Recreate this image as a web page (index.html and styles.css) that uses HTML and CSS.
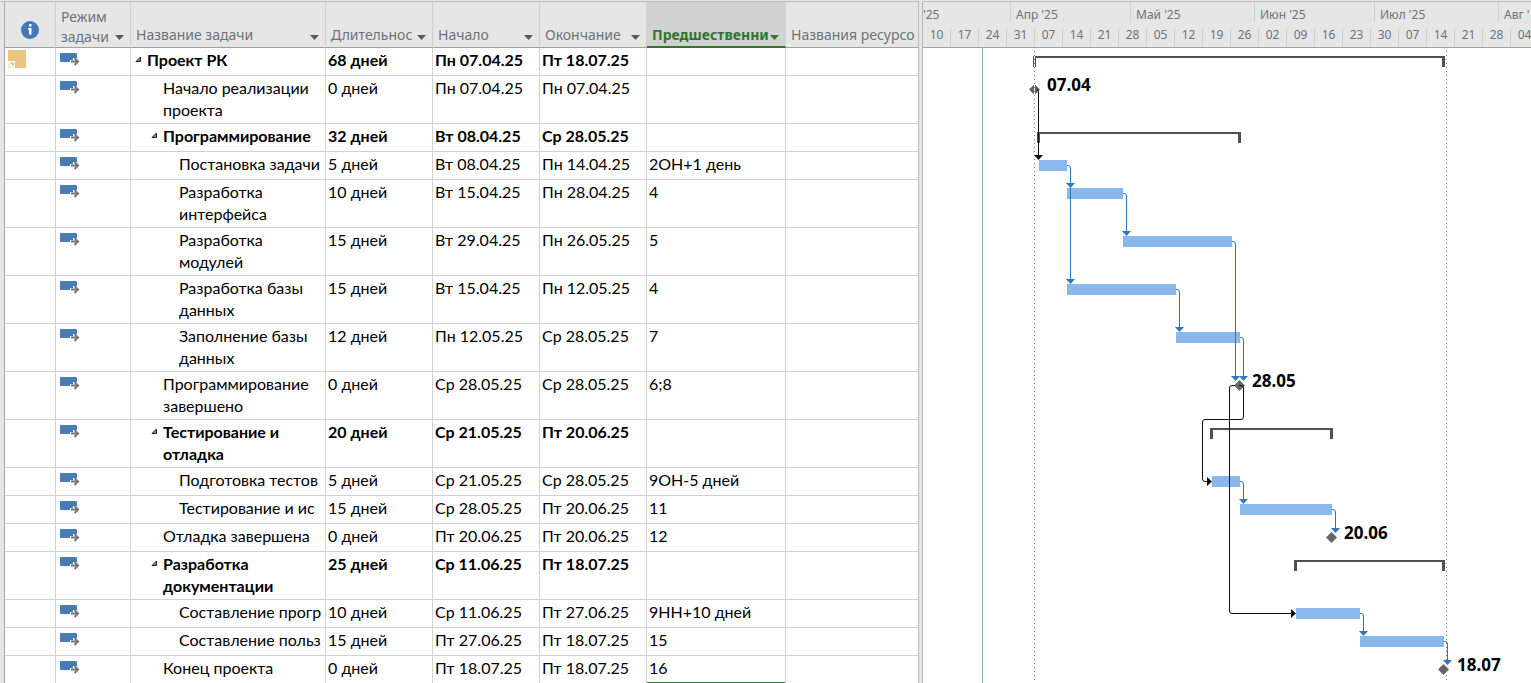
FILE: index.html
```
<!DOCTYPE html>
<html lang="ru">
<head>
<meta charset="utf-8">
<title>Проект РК</title>
<link rel="stylesheet" href="styles.css">
</head>
<body>
<svg class="defs" aria-hidden="true">
  <symbol id="mode" viewBox="0 0 20 14">
    <path fill="#487cb6" d="M1 1h15a1 1 0 0 1 1 1v4h-4v2h-3v2H1a1 1 0 0 1-1-1V2a1 1 0 0 1 1-1z"/>
    <path fill="none" stroke="#757575" stroke-width="2" d="M11 9.500h6M14.500 6l3.500 3.500-3.500 3.500"/>
  </symbol>
  <symbol id="fold" viewBox="0 0 7 7">
    <path fill="#8a8a8a" stroke="#222" d="M5.500 1v4.500H1z"/>
  </symbol>
  <symbol id="drop" viewBox="0 0 9 5"><path fill="currentColor" d="M0 0h9L4.500 5z"/></symbol>
</svg>
<main class="app">
  <section class="sheet">
    <table class="grid">
      <colgroup>
        <col class="c-info"><col class="c-mode"><col class="c-name"><col class="c-date"><col class="c-date"><col class="c-date"><col class="c-pred"><col>
      </colgroup>
      <thead>
        <tr>
          <th><div class="head info"><svg width="18" height="18" viewBox="0 0 18 18" role="img" aria-label="Индикаторы"><circle cx="9" cy="9" r="9" fill="#4478b6"/><path fill="#fff" d="M8 3h2.500v2.500H8zM7 7h3.500v6.500H8V8.500H7z"/></svg></div></th>
          <th><div class="head tall"><span>Режим<br>задачи</span><button aria-label="Меню: режим"><svg><use href="#drop"/></svg></button></div></th>
          <th><div class="head"><span>Название задачи</span><button aria-label="Меню: название"><svg><use href="#drop"/></svg></button></div></th>
          <th><div class="head"><span>Длительнос</span><button aria-label="Меню: длительность"><svg><use href="#drop"/></svg></button></div></th>
          <th><div class="head"><span>Начало</span><button aria-label="Меню: начало"><svg><use href="#drop"/></svg></button></div></th>
          <th><div class="head"><span>Окончание</span><button aria-label="Меню: окончание"><svg><use href="#drop"/></svg></button></div></th>
          <th class="active"><div class="head"><span>Предшественни</span><button aria-label="Меню: предшественники"><svg><use href="#drop"/></svg></button></div></th>
          <th><div class="head last"><span>Названия ресурсо</span></div></th>
        </tr>
      </thead>
      <tbody>
        <tr class="sum"><td class="note"><svg width="18" height="18" viewBox="0 0 18 18"><path fill="#e8c680" d="M0 0h18v18H7V11H0z"/><path fill="#e8c680" d="M1.500 12.500H6V17z"/><path fill="#e8c680" d="M0 13l5 5H0z" opacity=".35"/></svg></td><td class="mode"><svg><use href="#mode"/></svg></td><td class="l0"><button class="fold" aria-label="Свернуть"><svg><use href="#fold"/></svg></button>Проект РК</td><td>68 дней</td><td>Пн 07.04.25</td><td>Пт 18.07.25</td><td></td><td></td></tr>
        <tr><td></td><td class="mode"><svg><use href="#mode"/></svg></td><td class="l1">Начало реализации<br>проекта</td><td>0 дней</td><td>Пн 07.04.25</td><td>Пн 07.04.25</td><td></td><td></td></tr>
        <tr class="sum"><td></td><td class="mode"><svg><use href="#mode"/></svg></td><td class="l1"><button class="fold" aria-label="Свернуть"><svg><use href="#fold"/></svg></button>Программирование</td><td>32 дней</td><td>Вт 08.04.25</td><td>Ср 28.05.25</td><td></td><td></td></tr>
        <tr><td></td><td class="mode"><svg><use href="#mode"/></svg></td><td class="l2">Постановка задачи</td><td>5 дней</td><td>Вт 08.04.25</td><td>Пн 14.04.25</td><td>2ОН+1 день</td><td></td></tr>
        <tr><td></td><td class="mode"><svg><use href="#mode"/></svg></td><td class="l2">Разработка<br>интерфейса</td><td>10 дней</td><td>Вт 15.04.25</td><td>Пн 28.04.25</td><td>4</td><td></td></tr>
        <tr><td></td><td class="mode"><svg><use href="#mode"/></svg></td><td class="l2">Разработка<br>модулей</td><td>15 дней</td><td>Вт 29.04.25</td><td>Пн 26.05.25</td><td>5</td><td></td></tr>
        <tr><td></td><td class="mode"><svg><use href="#mode"/></svg></td><td class="l2">Разработка базы<br>данных</td><td>15 дней</td><td>Вт 15.04.25</td><td>Пн 12.05.25</td><td>4</td><td></td></tr>
        <tr><td></td><td class="mode"><svg><use href="#mode"/></svg></td><td class="l2">Заполнение базы<br>данных</td><td>12 дней</td><td>Пн 12.05.25</td><td>Ср 28.05.25</td><td>7</td><td></td></tr>
        <tr><td></td><td class="mode"><svg><use href="#mode"/></svg></td><td class="l1">Программирование<br>завершено</td><td>0 дней</td><td>Ср 28.05.25</td><td>Ср 28.05.25</td><td>6;8</td><td></td></tr>
        <tr class="sum"><td></td><td class="mode"><svg><use href="#mode"/></svg></td><td class="l1"><button class="fold" aria-label="Свернуть"><svg><use href="#fold"/></svg></button>Тестирование и<br>отладка</td><td>20 дней</td><td>Ср 21.05.25</td><td>Пт 20.06.25</td><td></td><td></td></tr>
        <tr><td></td><td class="mode"><svg><use href="#mode"/></svg></td><td class="l2">Подготовка тестов</td><td>5 дней</td><td>Ср 21.05.25</td><td>Ср 28.05.25</td><td>9ОН-5 дней</td><td></td></tr>
        <tr><td></td><td class="mode"><svg><use href="#mode"/></svg></td><td class="l2">Тестирование и ис</td><td>15 дней</td><td>Ср 28.05.25</td><td>Пт 20.06.25</td><td>11</td><td></td></tr>
        <tr><td></td><td class="mode"><svg><use href="#mode"/></svg></td><td class="l1">Отладка завершена</td><td>0 дней</td><td>Пт 20.06.25</td><td>Пт 20.06.25</td><td>12</td><td></td></tr>
        <tr class="sum"><td></td><td class="mode"><svg><use href="#mode"/></svg></td><td class="l1"><button class="fold" aria-label="Свернуть"><svg><use href="#fold"/></svg></button>Разработка<br>документации</td><td>25 дней</td><td>Ср 11.06.25</td><td>Пт 18.07.25</td><td></td><td></td></tr>
        <tr><td></td><td class="mode"><svg><use href="#mode"/></svg></td><td class="l2">Составление прогр</td><td>10 дней</td><td>Ср 11.06.25</td><td>Пт 27.06.25</td><td>9НН+10 дней</td><td></td></tr>
        <tr><td></td><td class="mode"><svg><use href="#mode"/></svg></td><td class="l2">Составление польз</td><td>15 дней</td><td>Пт 27.06.25</td><td>Пт 18.07.25</td><td>15</td><td></td></tr>
        <tr><td></td><td class="mode"><svg><use href="#mode"/></svg></td><td class="l1">Конец проекта</td><td>0 дней</td><td>Пт 18.07.25</td><td>Пт 18.07.25</td><td class="picked">16</td><td></td></tr>
      </tbody>
    </table>
  </section>
  <section class="gantt">
    <header class="scale">
      <div class="months"><span class="m-first">'25</span><span class="m30">Апр '25</span><span class="m31">Май '25</span><span class="m30">Июн '25</span><span class="m31">Июл '25</span><span class="m31">Авг '</span></div>
      <div class="weeks"><span>10</span><span>17</span><span>24</span><span>31</span><span>07</span><span>14</span><span>21</span><span>28</span><span>05</span><span>12</span><span>19</span><span>26</span><span>02</span><span>09</span><span>16</span><span>23</span><span>30</span><span>07</span><span>14</span><span>21</span><span>28</span><span>04</span></div>
    </header>
    <svg class="chart" role="img" aria-label="Диаграмма Ганта">
      <g transform="translate(-923 -48)">
        <path class="today" d="M982.500 48V700"/>
        <g class="bars">
          <rect x="1039" y="160" width="28" height="11"/>
          <rect x="1067" y="188" width="56" height="11"/>
          <rect x="1123" y="236" width="109" height="11"/>
          <rect x="1067" y="284" width="109" height="11"/>
          <rect x="1176" y="332" width="64" height="11"/>
          <rect x="1212" y="476" width="28" height="11"/>
          <rect x="1240" y="504" width="92" height="11"/>
          <rect x="1296" y="608" width="64" height="11"/>
          <rect x="1360" y="636" width="84" height="11"/>
        </g>
        <g class="sums">
          <path d="M1033 56h412v11h-3v-9h-406v9h-3z"/>
          <path d="M1037 132h204v11h-3v-9h-198v9h-3z"/>
          <path d="M1210 428h123v11h-3v-9h-117v9h-3z"/>
          <path d="M1294 560h151v11h-3v-9h-145v9h-3z"/>
        </g>
        <g class="miles">
          <path d="M1034.500 84l5.500 5.500-5.500 5.500-5.500-5.500z"/>
          <path d="M1239.500 380l5.500 5.500-5.500 5.500-5.500-5.500z"/>
          <path d="M1331.500 532l5.500 5.500-5.500 5.500-5.500-5.500z"/>
          <path d="M1443.500 664l5.500 5.500-5.500 5.500-5.500-5.500z"/>
        </g>
        <path class="edge" d="M1034.500 51V700M1446.500 51V700"/>
        <path class="gap" d="M1034.500 56V67M1034.500 84V95"/>
        <g class="links">
          <path d="M1067 165.500h1q2.500 0 2.500 2.500V280"/>
          <path d="M1123 193.500h1q2.500 0 2.500 2.500V232"/>
          <path d="M1232 241.500h1q2.500 0 2.500 2.500V377"/>
          <path d="M1176 289.500h1q2.500 0 2.500 2.500V328"/>
          <path d="M1240 337.500h1q2.500 0 2.500 2.500V377"/>
          <path d="M1240 481.500h1q2.500 0 2.500 2.500V500"/>
          <path d="M1332 509.500h1q2.500 0 2.500 2.500V529"/>
          <path d="M1360 613.500h1q2.500 0 2.500 2.500V632"/>
          <path d="M1444 641.500h1q2.500 0 2.500 2.500V661"/>
        </g>
        <g class="tips">
          <path d="M1066 183h9l-4.500 5zM1066 279h9l-4.500 5zM1122 231h9l-4.500 5zM1175 327h9l-4.500 5zM1231 376h9l-4.500 5zM1239 376h9l-4.500 5zM1239 499h9l-4.500 5zM1331 528h9l-4.500 5zM1359 631h9l-4.500 5zM1443 660h9l-4.500 5z"/>
        </g>
        <g class="dark-links">
          <path d="M1036 89.500h.500q2 0 2 2V156"/>
          <path d="M1239 385.500h2q2.500 0 2.500 2.500V417q0 2.500-2.500 2.500H1205q-2.500 0-2.500 2.500V479q0 2.500 2.500 2.500h3"/>
          <path d="M1235 385.500h-3q-2.500 0-2.500 2.500V611q0 2.500 2.500 2.500H1292"/>
        </g>
        <path class="dark-tips" d="M1034 155h9l-4.500 5zM1207 477v9l5-4.500zM1291 609v9l5-4.500z"/>
        <g class="labels">
          <text x="1047" y="91">07.04</text>
          <text x="1252" y="387">28.05</text>
          <text x="1344" y="539">20.06</text>
          <text x="1457" y="671">18.07</text>
        </g>
      </g>
    </svg>
  </section>
</main>
</body>
</html>
```
FILE: styles.css
```
* { box-sizing: border-box; }
body {
  margin: 0;
  background: #e6e6e6;
  font-family: "Noto Sans", "Open Sans", sans-serif;
  overflow: hidden;
}
.defs { position: absolute; width: 0; height: 0; }
.app {
  display: flex;
  gap: 3px;
  height: 100vh;
  padding-top: 1px;
  overflow: hidden;
}
.sheet {
  flex: 0 0 919px;
  padding-left: 4px;
  border-top: 1px solid #bdbdbd;
  border-right: 1px solid #b8b8b8;
  overflow: hidden;
}
.grid {
  width: 100%;
  table-layout: fixed;
  border-collapse: separate;
  border-spacing: 0;
  border-left: 1px solid #a6a6a6;
}
.c-info { width: 51px; }
.c-mode { width: 75px; }
.c-name { width: 195px; }
.c-date { width: 107px; }
.c-pred { width: 139px; }
th {
  height: 46px;
  padding: 0;
  vertical-align: bottom;
  background: #e6e6e6;
  border-right: 1px solid #cfcfcf;
  border-bottom: 1px solid #a0a0a0;
  color: #6d7278;
  font-size: 14px;
  font-weight: 400;
  line-height: 20px;
  text-align: left;
}
th:last-child, td:last-child { border-right: 0; }
.head {
  display: flex;
  align-items: flex-end;
  justify-content: space-between;
  gap: 1px;
  padding: 0 6px 2px 5px;
}
.head span { white-space: nowrap; }
.head.last { padding-right: 0; }
.head.tall { padding-bottom: 0; }
.head.info { justify-content: center; padding-bottom: 8px; }
.head button, .fold {
  flex: none;
  padding: 0;
  border: 0;
  background: none;
  color: #5a5a5a;
}
.head button {
  display: flex;
  align-items: flex-start;
  height: 10px;
}
.head.tall button { height: 12px; }
.head button svg { display: block; width: 9px; height: 5px; }
.active { background: #d2d2d2; border-bottom: 2px solid #2f752f; }
.active .head { color: #2f752f; font-weight: 700; padding-bottom: 1px; }
.active .head button { color: #2f752f; }
td {
  height: 28px;
  padding: 1px 2px 2px;
  vertical-align: top;
  background: #fff;
  border-right: 1px solid #d0d3d3;
  border-bottom: 1px solid #d0d3d3;
  color: #000;
  font-family: Lato, "Noto Sans", sans-serif;
  font-size: 16px;
  line-height: 22px;
  white-space: nowrap;
  overflow: hidden;
}
.sum td { font-weight: 700; }
td svg { display: block; }
.mode { padding: 4px 4px 0; }
.mode svg { width: 20px; height: 14px; }
.note { padding: 2px 3px; }
.l0 { padding-left: 16px; }
.l1 { padding-left: 32px; }
.l2 { padding-left: 48px; }
.fold { width: 12px; height: 10px; margin-left: -12px; }
.fold svg { width: 7px; height: 7px; margin-bottom: 3px; }
.picked { border-bottom: 2px solid #2f752f; }
.gantt {
  flex: 1;
  min-width: 0;
  border-top: 1px solid #bdbdbd;
  border-left: 1px solid #b8b8b8;
  background: #fff;
  overflow: hidden;
}
.scale {
  height: 46px;
  overflow: hidden;
  background: #e6e6e6;
  border-bottom: 1px solid #a0a0a0;
  color: #6d7278;
  font-size: 12px;
}
.months, .weeks { display: flex; }
.months { height: 27px; line-height: 25px; }
.months span {
  flex: none;
  height: 20px;
  padding-left: 5px;
  border-left: 1px solid #cfcfcf;
  white-space: nowrap;
}
.months .m-first { width: 87px; padding-left: 0; border-left: 0; }
.m30 { width: 120px; }
.m31 { width: 124px; }
.weeks { height: 18px; line-height: 12px; }
.weeks span {
  flex: none;
  width: 28px;
  border-right: 1px solid #cfcfcf;
  text-align: center;
}
.chart { display: block; width: 100%; height: calc(100vh - 48px); }
.today { stroke: #8cbc8c; }
.bars rect { fill: #8ab8ea; }
.sums path { fill: #505050; }
.miles path { fill: #666; }
.edge { stroke: #777; stroke-dasharray: 1 3; }
.gap { stroke: #fff; stroke-dasharray: 3 1; }
.links path { fill: none; stroke: #2f75b5; }
.tips path { fill: #2f78c4; }
.dark-links path { fill: none; stroke: #111; }
.dark-tips { fill: #111; }
.labels text { font-size: 17px; font-weight: 700; fill: #000; }
```
